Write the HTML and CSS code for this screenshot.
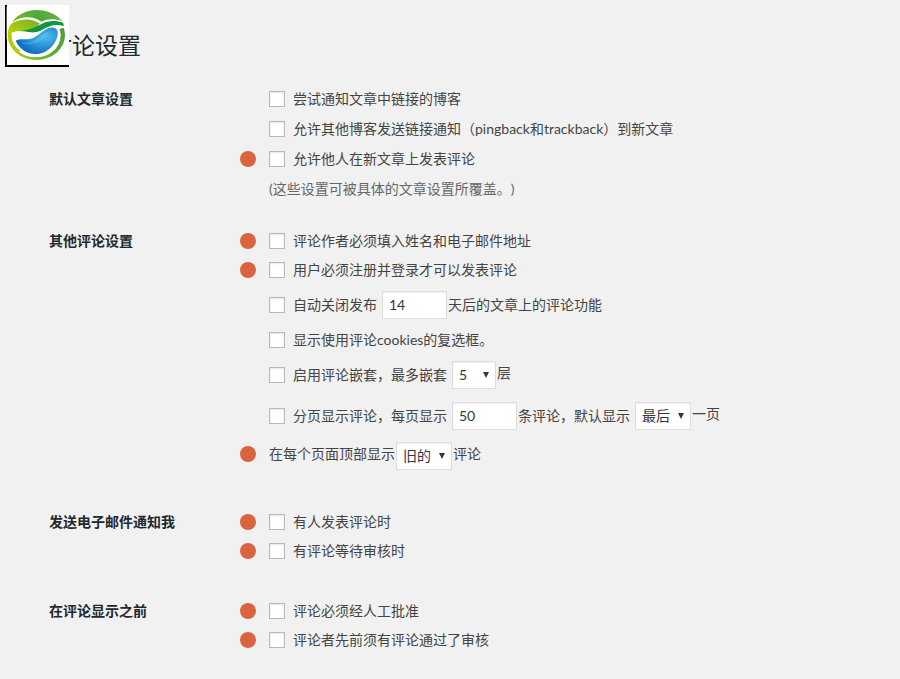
FILE: index.html
```html
<!DOCTYPE html>
<html lang="zh-CN">
<head>
	<meta charset="UTF-8">
	<meta name="viewport" content="width=device-width, initial-scale=1">
	<title>讨论设置</title>
	<link rel="stylesheet" href="styles.css">
</head>
<body>
	<header class="page-header">
		<h1>讨论设置</h1>
		<svg class="logo" viewBox="15 15 192 186" aria-hidden="true">
			<defs>
				<linearGradient id="top" x1="0" x2="1">
					<stop offset="0" stop-color="#7cb82f"/>
					<stop offset=".5" stop-color="#4fa83a"/>
					<stop offset="1" stop-color="#6bb045"/>
				</linearGradient>
				<linearGradient id="leaf" x1="0" y1="1" x2="1" y2="0">
					<stop offset="0" stop-color="#c9d600"/>
					<stop offset="1" stop-color="#6db32a"/>
				</linearGradient>
				<linearGradient id="ring" x1="0" x2="1">
					<stop offset="0" stop-color="#b9cd00"/>
					<stop offset=".5" stop-color="#7db92c"/>
					<stop offset="1" stop-color="#4fa037"/>
				</linearGradient>
				<radialGradient id="water" cx=".7" cy=".35" r=".7">
					<stop offset="0" stop-color="#4fbcec"/>
					<stop offset="1" stop-color="#0b6cc0"/>
				</radialGradient>
			</defs>
			<rect x="15" y="15" width="192" height="186" fill="#000"/>
			<rect x="21" y="15" width="186" height="180" fill="#fff"/>
			<ellipse cx="109" cy="105" rx="86" ry="75" fill="url(#ring)"/>
			<ellipse cx="107" cy="106" rx="75" ry="66" fill="#fff"/>
			<path d="M20 99L20 20H205V85L182 84C150 78 130 106 98 98 68 88 42 82 20 118Z" fill="#fff"/>
			<path d="M36 67C50 45 78 30 109 30c33 0 63 14 78 34-24-8-42-8-63 1C106 52 72 42 36 67Z" fill="url(#top)"/>
			<path d="M24 108C23 86 29 73 42 67c28-14 57-10 77 3-8 20-32 26-52 24-19-1-31 1-43 14Z" fill="url(#leaf)"/>
			<path d="M42 94c36-1 61-10 84-23 20-10 43-10 63-3l3 10c-26-7-43-1-61 9-32 20-50 4-89 7Z" fill="#12963f"/>
			<path d="M24 112C38 91 64 91 88 97c32 8 52-14 78-15 9 0 14 2 20 5-34-2-50 18-75 29-24 9-43-2-62 6-8 4-13 8-17 14l-8-24Z" fill="#fff"/>
			<path d="M47 122c15-9 34 1 54-9 21-10 36-34 60-30 20 3 13 34-1 51-13 18-34 28-54 28-27 0-49-17-59-40Z" fill="url(#water)"/>
			<path d="M60 128c21 1 34-1 51-11 14-9 23-20 39-23-15 25-44 49-90 34Z" fill="#6cc9f2" opacity=".35"/>
			<path d="M24 94c-3 27 8 51 28 66l9-8C43 140 33 121 35 101Z" fill="#b6cb08"/>
		</svg>
	</header>

	<form class="settings">
		<section class="group group-articles">
			<h2>默认文章设置</h2>
			<div class="options">
				<div class="row">
					<input type="checkbox" id="pingback_flag">
					<label for="pingback_flag">尝试通知文章中链接的博客</label>
				</div>
				<div class="row">
					<input type="checkbox" id="ping_status">
					<label for="ping_status">允许其他博客发送链接通知（pingback和trackback）到新文章</label>
				</div>
				<div class="row marked">
					<input type="checkbox" id="comment_status">
					<label for="comment_status">允许他人在新文章上发表评论</label>
				</div>
				<p class="row description">(这些设置可被具体的文章设置所覆盖。)</p>
			</div>
		</section>

		<section class="group">
			<h2>其他评论设置</h2>
			<div class="options">
				<div class="row marked">
					<input type="checkbox" id="require_name_email">
					<label for="require_name_email">评论作者必须填入姓名和电子邮件地址</label>
				</div>
				<div class="row marked">
					<input type="checkbox" id="comment_registration">
					<label for="comment_registration">用户必须注册并登录才可以发表评论</label>
				</div>
				<div class="row row-field">
					<input type="checkbox" id="close_comments">
					<label for="close_comments">自动关闭发布</label>
					<input type="text" class="field" id="close_days" value="14" aria-label="天数">
					<label for="close_days">天后的文章上的评论功能</label>
				</div>
				<div class="row">
					<input type="checkbox" id="show_cookies">
					<label for="show_cookies">显示使用评论cookies的复选框。</label>
				</div>
				<div class="row row-field">
					<input type="checkbox" id="thread_comments">
					<label for="thread_comments">启用评论嵌套，最多嵌套</label>
					<span class="select select-short">
						<select id="thread_depth" aria-label="嵌套层数">
							<option>2</option>
							<option>3</option>
							<option>4</option>
							<option selected>5</option>
							<option>6</option>
						</select>
					</span>
					<label class="raised" for="thread_depth">层</label>
				</div>
				<div class="row row-field">
					<input type="checkbox" id="page_comments">
					<label for="page_comments">分页显示评论，每页显示</label>
					<input type="text" class="field" id="per_page" value="50" aria-label="每页评论数">
					<label for="per_page">条评论，默认显示</label>
					<span class="select">
						<select id="default_page" aria-label="默认显示页">
							<option selected>最后</option>
							<option>最前</option>
						</select>
					</span>
					<label class="raised" for="default_page">一页</label>
				</div>
				<div class="row row-field row-order marked">
					<label class="raised" for="comment_order">在每个页面顶部显示</label>
					<span class="select">
						<select id="comment_order">
							<option selected>旧的</option>
							<option>新的</option>
						</select>
					</span>
					<label class="raised" for="comment_order">评论</label>
				</div>
			</div>
		</section>

		<section class="group">
			<h2>发送电子邮件通知我</h2>
			<div class="options">
				<div class="row marked">
					<input type="checkbox" id="comments_notify">
					<label for="comments_notify">有人发表评论时</label>
				</div>
				<div class="row marked">
					<input type="checkbox" id="moderation_notify">
					<label for="moderation_notify">有评论等待审核时</label>
				</div>
			</div>
		</section>

		<section class="group">
			<h2>在评论显示之前</h2>
			<div class="options">
				<div class="row marked">
					<input type="checkbox" id="comment_moderation">
					<label for="comment_moderation">评论必须经人工批准</label>
				</div>
				<div class="row marked">
					<input type="checkbox" id="comment_whitelist">
					<label for="comment_whitelist">评论者先前须有评论通过了审核</label>
				</div>
			</div>
		</section>
	</form>
</body>
</html>
```

FILE: styles.css
```css
* {
	box-sizing: border-box;
}

body {
	margin: 0;
	background: #f1f1f1;
	color: #444;
	font-family: Lato, "Noto Sans CJK SC", sans-serif;
	font-size: 14px;
	line-height: 20px;
	text-spacing-trim: space-all;
}

.page-header {
	position: relative;
	padding: 30px 49px 24px;
}

h1 {
	margin: 0;
	color: #23282d;
	font-size: 23px;
	font-weight: 400;
	line-height: 30px;
}

/* sits over the start of the title */
.logo {
	position: absolute;
	top: 5px;
	left: 5px;
	width: 64px;
	height: 62px;
}

.settings {
	padding: 0 49px;
}

.group {
	display: grid;
	grid-template-columns: 220px 1fr;
	margin-bottom: 31px;
}

.group-articles {
	margin-bottom: 22px;
}

h2 {
	margin: 0;
	padding-top: 5px;
	color: #23282d;
	font-size: 14px;
	font-weight: 600;
	line-height: 20px;
}

.row {
	position: relative;
	display: flex;
	align-items: center;
	height: 29px;
	margin: 0;
	white-space: nowrap;
}

.group-articles .row {
	height: 30px;
}

.row-field {
	height: 41px;
}

.row-order {
	height: 40px;
}

.description {
	color: #666;
}

.marked::before {
	content: "";
	position: absolute;
	left: -29px;
	width: 16px;
	height: 16px;
	border-radius: 50%;
	background: #d9643f;
}

.row-order::before {
	top: 10px;
}

input[type="checkbox"] {
	appearance: none;
	flex: none;
	width: 16px;
	height: 16px;
	margin: 0 8px 0 0;
	border: 1px solid #b4b9be;
	background: #fff;
	box-shadow: inset 0 1px 2px rgba(0, 0, 0, .1);
}

input[type="checkbox"]:checked {
	background: #1e8cbe;
}

.field,
select {
	height: 28px;
	border: 1px solid #ddd;
	border-radius: 0;
	background: #fff;
	color: #32373c;
	font: inherit;
	box-shadow: inset 0 1px 2px rgba(0, 0, 0, .07);
}

.field {
	width: 65px;
	margin: 0 1px 0 5px;
	padding: 0 6px;
}

.select {
	position: relative;
	width: 56px;
	margin: 0 1px 0 5px;
}

.select-short {
	width: 44px;
}

.row-order .select {
	margin-left: 1px;
}

select {
	appearance: none;
	display: block;
	width: 100%;
	padding: 0 6px;
}

.select::after {
	content: "";
	position: absolute;
	top: 11px;
	right: 7px;
	border: solid transparent;
	border-width: 6px 3px 0;
	border-top-color: #32373c;
	pointer-events: none;
}

.raised {
	padding-bottom: 4px;
}
```
